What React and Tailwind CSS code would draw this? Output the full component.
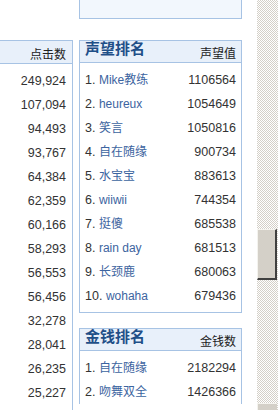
const FONT = "font-['Liberation_Sans','Noto_Sans_CJK_SC',sans-serif]";

const clicks = [
  "249,924", "107,094", "94,493", "93,767", "64,384", "62,359", "60,166",
  "58,293", "56,553", "56,456", "32,278", "28,041", "26,235", "25,227",
];

const fame = [
  ["Mike教练", "1106564"],
  ["heureux", "1054649"],
  ["笑言", "1050816"],
  ["自在随缘", "900734"],
  ["水宝宝", "883613"],
  ["wiiwii", "744354"],
  ["挺傻", "685538"],
  ["rain day", "681513"],
  ["长颈鹿", "680063"],
  ["wohaha", "679436"],
];

const money = [
  ["自在随缘", "2182294"],
  ["吻舞双全", "1426366"],
];

function Rank({ title, label, rows, last }) {
  return (
    <div className={`border border-[#a7c3e4] ${last ? "border-b-0" : "pb-[4px]"}`}>
      <div className="flex justify-between h-[22px] px-[5px] bg-[#e8f0fa] border-b border-[#a7c3e4]">
        <div className="text-[15px] leading-[16px] font-bold text-[#1f4f88]">{title}</div>
        <div className="self-end text-[12px] leading-[16px] text-[#222]">{label}</div>
      </div>
      <div className="pt-[5px]">
        {rows.map(([name, val], i) => (
          <div key={i} className="flex justify-between h-[24px] leading-[24px] px-[5px] text-[12.5px]">
            <span className="text-[#333]">
              {i + 1}.{" "}
              <span className="text-[#3c64a0] text-[12px]">{name}</span>
            </span>
            <span className="text-[#333]">{val}</span>
          </div>
        ))}
      </div>
    </div>
  );
}

export default function App() {
  return (
    <div className={`flex w-[278px] h-[410px] overflow-hidden bg-white ${FONT}`}>
      <div className="w-[73px] shrink-0 pt-[40px]">
        <div className="border-r border-[#a7c3e4] h-full">
          <div className="flex justify-end h-[24px] pr-[6px] bg-[#e8f0fa] border-y border-[#a7c3e4]">
            <div className="self-end text-[12px] leading-[16px] text-[#222]">点击数</div>
          </div>
          <div className="pt-[5px]">
            {clicks.map((c) => (
              <div key={c} className="h-[24px] leading-[24px] pr-[6px] text-right text-[12.5px] text-[#333]">
                {c}
              </div>
            ))}
          </div>
        </div>
      </div>

      <div className="w-[163px] shrink-0 ml-[6px]">
        <div className="h-[19px] bg-[#f2f7fd] border-x border-b border-[#a7c3e4]" />
        <div className="mt-[21px]">
          <Rank title="声望排名" label="声望值" rows={fame} />
        </div>
        <div className="mt-[15px]">
          <Rank title="金钱排名" label="金钱数" rows={money} last />
        </div>
      </div>

      <div className="w-[15px] shrink-0" />

      <div className="w-[21px] shrink-0 h-full flex flex-col bg-[image:repeating-conic-gradient(#d4d0c8_0_25%,#ffffff_0_50%)] bg-[length:2px_2px]">
        <div className="mt-[229px] w-[20px] h-[51px] bg-[#d4d0c8] border-t border-l border-t-[#f4f3ee] border-l-[#f4f3ee] border-r-2 border-b-2 border-r-[#404040] border-b-[#404040]" />
        <div className="mt-auto w-[20px] h-[7px] bg-[#d4d0c8] border-t border-l border-[#f4f3ee]" />
      </div>
    </div>
  );
}
